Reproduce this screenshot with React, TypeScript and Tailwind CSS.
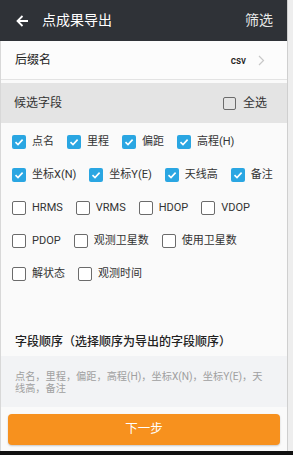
import React from "react";

const FONT = { fontFamily: 'Roboto, "Noto Sans CJK SC", sans-serif' };

function Box({ checked }: { checked: boolean }) {
  if (checked) {
    return (
      <span className="w-[14px] h-[14px] rounded-[2px] bg-[#2aa6e2] flex items-center justify-center shrink-0">
        <svg width="10" height="10" viewBox="0 0 10 10">
          <path d="M1.5 5.2 L4 7.6 L8.6 2.6" fill="none" stroke="#fff" strokeWidth="1.6" />
        </svg>
      </span>
    );
  }
  return <span className="w-[14px] h-[14px] rounded-[2px] border-[1.5px] border-[#6b6b6b] shrink-0 bg-white" />;
}

function Item({ label, checked }: { label: string; checked: boolean }) {
  return (
    <div className="flex items-center gap-[6px] shrink-0">
      <Box checked={checked} />
      <span className="text-[11px] text-[#333] leading-none whitespace-nowrap">{label}</span>
    </div>
  );
}

const rows: [string, boolean][][] = [
  [["点名", true], ["里程", true], ["偏距", true], ["高程(H)", true]],
  [["坐标X(N)", true], ["坐标Y(E)", true], ["天线高", true], ["备注", true]],
  [["HRMS", false], ["VRMS", false], ["HDOP", false], ["VDOP", false]],
  [["PDOP", false], ["观测卫星数", false], ["使用卫星数", false]],
  [["解状态", false], ["观测时间", false]],
];

export default function App() {
  return (
    <div className="w-[293px] h-[455px] flex flex-col bg-[#111] overflow-hidden" style={FONT}>
      <div className="flex flex-1 min-h-0">
        <div className="w-[287px] flex flex-col bg-[#fafafa]">
          <div className="h-[41px] bg-[#2f3237] flex items-center pl-[16px] pr-[14px]">
            <svg width="13" height="12" viewBox="0 0 13 12">
              <path d="M12 6 H1.8 M6.5 1 L1.5 6 L6.5 11" fill="none" stroke="#fff" strokeWidth="1.8" />
            </svg>
            <span className="ml-[13px] text-[14px] text-white">点成果导出</span>
            <span className="ml-auto text-[14px] text-[#e8e8e8]">筛选</span>
          </div>
          <div className="flex-1 flex flex-col border-l border-[#d8d8d8]">
            <div className="h-[39px] flex items-center pl-[14px] pr-[22px] border-b border-[#e3e3e3] bg-[#fcfcfc]">
              <span className="text-[12px] text-[#222]">后缀名</span>
              <span className="ml-auto text-[10px] font-medium text-[#222]">csv</span>
              <svg className="ml-[12px]" width="7" height="11" viewBox="0 0 7 11">
                <path d="M1 1 L5.5 5.5 L1 10" fill="none" stroke="#c8c8c8" strokeWidth="1.2" />
              </svg>
            </div>
            <div className="h-[40px] mt-[3px] bg-[#e4e4e4] flex items-center pl-[13px] pr-[20px]">
              <span className="text-[12px] text-[#333]">候选字段</span>
              <div className="ml-auto flex items-center gap-[7px]">
                <span className="w-[13px] h-[13px] rounded-[2px] border-[1.5px] border-[#6b6b6b]" />
                <span className="text-[12px] text-[#333]">全选</span>
              </div>
            </div>
            <div className="flex flex-col pt-[2px]">
              {rows.map((r, i) => (
                <div key={i} className="h-[33px] flex items-center pl-[11px] gap-x-[13px]">
                  {r.map(([l, c]) => (
                    <Item key={l} label={l} checked={c} />
                  ))}
                </div>
              ))}
            </div>
            <div className="mt-auto">
              <div className="pl-[14px] text-[12px] font-medium text-[#222] leading-[16px] mb-[6px]">
                字段顺序（选择顺序为导出的字段顺序）
              </div>
              <div className="bg-[#f2f3f5] pl-[14px] pr-[20px] pt-[15px] pb-[12px] text-[10.2px] leading-[12px] text-[#a0a0a0]">
                点名，里程，偏距，高程(H)，坐标X(N)，坐标Y(E)，天线高，备注
              </div>
              <div className="px-[7px] pt-[7px] pb-[6px]">
                <div className="h-[31px] rounded-[4px] bg-[#f7911e] shadow-[0_1px_2px_rgba(0,0,0,0.2)] flex items-center justify-center text-[12.5px] text-white">
                  下一步
                </div>
              </div>
            </div>
          </div>
        </div>
        <div className="w-[6px] flex">
          <div className="w-[1px] bg-[#cfcfcf]" />
          <div className="flex-1 bg-[#eeeeee]" />
        </div>
      </div>
      <div className="h-[4px] bg-[#111]" />
    </div>
  );
}
